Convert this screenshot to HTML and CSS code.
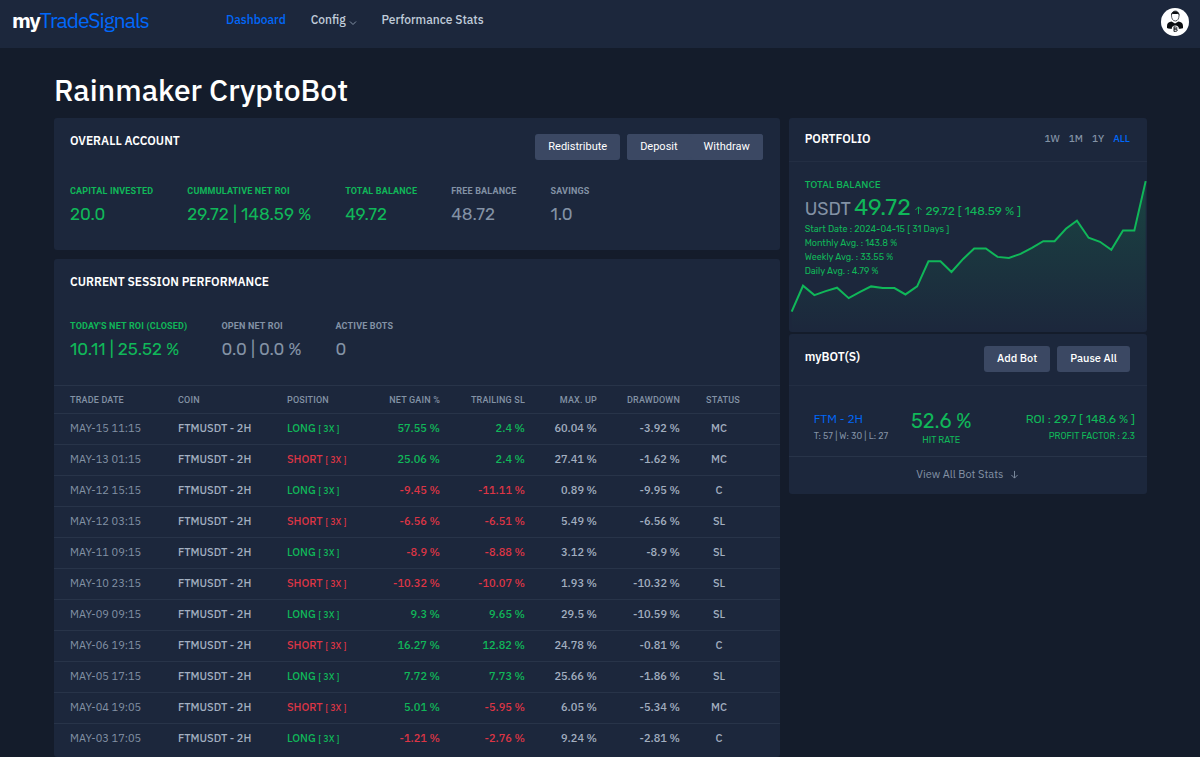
FILE: index.html
```html
<!DOCTYPE html>
<html lang="en">
<head>
    <meta charset="UTF-8">
    <meta name="viewport" content="width=device-width, initial-scale=1.0">
    <title>myTradeSignals</title>
    <link rel="stylesheet" href="styles.css">
</head>
<body>

    <header class="topbar">
        <a class="logo" href="#"><b>my</b>TradeSignals</a>
        <nav class="menu">
            <a class="active" href="#">Dashboard</a>
            <a href="#">Config <svg class="chevron" viewBox="0 0 8 6"><path d="M1 1.500l3 3 3-3"/></svg></a>
            <a href="#">Performance Stats</a>
        </nav>
        <button class="avatar" aria-label="Account">
            <svg viewBox="0 0 28 28">
                <circle cx="14" cy="14" r="14" fill="#fff"/>
                <path d="M6 20v-2c0-3 2-4 4.500-4.500l3.500 2 3.500-2c2.500.5 4.500 1.500 4.500 4.500v2c-1 1.300-14 1.300-16 0z" fill="#0b0d10"/>
                <path d="M10.500 7.500c0-6 7.500-6 7.500 0 0 2.500-1 5.500-3.700 5.500s-3.800-3-3.800-5.500z" fill="#fff" stroke="#15181c" stroke-width=".7"/>
                <path d="M10 8c-.5-6.500 9-6.500 8.500 0l-1-2.300c-2 .5-4.500.5-6.500 0z" fill="#0b0d10"/>
                <circle cx="14.300" cy="21" r="3.600" fill="#fff"/>
                <path d="M13 18.500v5M13 19h1.500c2 0 2 2 0 2H13M13 21h1.800c2 0 2 2.300 0 2.300H13" fill="none" stroke="#15181c" stroke-width="1"/>
            </svg>
        </button>
    </header>

    <main class="page">
        <h1>Rainmaker CryptoBot</h1>

        <div class="columns">
            <div class="left">
                <section class="card account">
                    <div class="card-top">
                        <h2>OVERALL ACCOUNT</h2>
                        <div class="buttons">
                            <button class="btn">Redistribute</button>
                            <div class="btn-group">
                                <button class="btn">Deposit</button>
                                <button class="btn">Withdraw</button>
                            </div>
                        </div>
                    </div>
                    <div class="stats">
                        <div class="green"><h3>CAPITAL INVESTED</h3><p>20.0</p></div>
                        <div class="green"><h3>CUMMULATIVE NET ROI</h3><p>29.72 | 148.59 %</p></div>
                        <div class="green"><h3>TOTAL BALANCE</h3><p>49.72</p></div>
                        <div><h3>FREE BALANCE</h3><p>48.72</p></div>
                        <div><h3>SAVINGS</h3><p>1.0</p></div>
                    </div>
                </section>

                <section class="card session">
                    <div class="card-top">
                        <h2>CURRENT SESSION PERFORMANCE</h2>
                    </div>
                    <div class="stats">
                        <div class="green"><h3>TODAY'S NET ROI (CLOSED)</h3><p>10.11 | 25.52 %</p></div>
                        <div><h3>OPEN NET ROI</h3><p>0.0 | 0.0 %</p></div>
                        <div><h3>ACTIVE BOTS</h3><p>0</p></div>
                    </div>
                    <table class="trades">
                        <colgroup>
                            <col class="c-date"><col class="c-coin"><col class="c-pos"><col class="c-gain">
                            <col class="c-sl"><col class="c-up"><col class="c-down"><col class="c-status">
                        </colgroup>
                        <thead>
                            <tr><th>TRADE DATE</th><th>COIN</th><th>POSITION</th><th>NET GAIN %</th><th>TRAILING SL</th><th>MAX. UP</th><th>DRAWDOWN</th><th>STATUS</th></tr>
                        </thead>
                        <tbody>
                            <tr><td>MAY-15 11:15</td><td>FTMUSDT - 2H</td><td class="green">LONG <small>[ 3X ]</small></td><td class="green">57.55 %</td><td class="green">2.4 %</td><td>60.04 %</td><td>-3.92 %</td><td>MC</td></tr>
                            <tr><td>MAY-13 01:15</td><td>FTMUSDT - 2H</td><td class="red">SHORT <small>[ 3X ]</small></td><td class="green">25.06 %</td><td class="green">2.4 %</td><td>27.41 %</td><td>-1.62 %</td><td>MC</td></tr>
                            <tr><td>MAY-12 15:15</td><td>FTMUSDT - 2H</td><td class="green">LONG <small>[ 3X ]</small></td><td class="red">-9.45 %</td><td class="red">-11.11 %</td><td>0.89 %</td><td>-9.95 %</td><td>C</td></tr>
                            <tr><td>MAY-12 03:15</td><td>FTMUSDT - 2H</td><td class="red">SHORT <small>[ 3X ]</small></td><td class="red">-6.56 %</td><td class="red">-6.51 %</td><td>5.49 %</td><td>-6.56 %</td><td>SL</td></tr>
                            <tr><td>MAY-11 09:15</td><td>FTMUSDT - 2H</td><td class="green">LONG <small>[ 3X ]</small></td><td class="red">-8.9 %</td><td class="red">-8.88 %</td><td>3.12 %</td><td>-8.9 %</td><td>SL</td></tr>
                            <tr><td>MAY-10 23:15</td><td>FTMUSDT - 2H</td><td class="red">SHORT <small>[ 3X ]</small></td><td class="red">-10.32 %</td><td class="red">-10.07 %</td><td>1.93 %</td><td>-10.32 %</td><td>SL</td></tr>
                            <tr><td>MAY-09 09:15</td><td>FTMUSDT - 2H</td><td class="green">LONG <small>[ 3X ]</small></td><td class="green">9.3 %</td><td class="green">9.65 %</td><td>29.5 %</td><td>-10.59 %</td><td>SL</td></tr>
                            <tr><td>MAY-06 19:15</td><td>FTMUSDT - 2H</td><td class="red">SHORT <small>[ 3X ]</small></td><td class="green">16.27 %</td><td class="green">12.82 %</td><td>24.78 %</td><td>-0.81 %</td><td>C</td></tr>
                            <tr><td>MAY-05 17:15</td><td>FTMUSDT - 2H</td><td class="green">LONG <small>[ 3X ]</small></td><td class="green">7.72 %</td><td class="green">7.73 %</td><td>25.66 %</td><td>-1.86 %</td><td>SL</td></tr>
                            <tr><td>MAY-04 19:05</td><td>FTMUSDT - 2H</td><td class="red">SHORT <small>[ 3X ]</small></td><td class="green">5.01 %</td><td class="red">-5.95 %</td><td>6.05 %</td><td>-5.34 %</td><td>MC</td></tr>
                            <tr><td>MAY-03 17:05</td><td>FTMUSDT - 2H</td><td class="green">LONG <small>[ 3X ]</small></td><td class="red">-1.21 %</td><td class="red">-2.76 %</td><td>9.24 %</td><td>-2.81 %</td><td>C</td></tr>
                        </tbody>
                    </table>
                </section>
            </div>

            <div class="right">
                <section class="card">
                    <div class="card-head portfolio-head">
                        <h2>PORTFOLIO</h2>
                        <nav class="ranges">
                            <a href="#">1W</a>
                            <a href="#">1M</a>
                            <a href="#">1Y</a>
                            <a class="active" href="#">ALL</a>
                        </nav>
                    </div>
                    <div class="portfolio">
                        <svg class="chart" viewBox="12 141 1074 507" preserveAspectRatio="none">
                            <defs>
                                <linearGradient id="fade" x1="0" y1="0" x2="0" y2="1">
                                    <stop offset="0" stop-color="#10b759" stop-opacity=".2"/>
                                    <stop offset="1" stop-color="#10b759" stop-opacity="0"/>
                                </linearGradient>
                            </defs>
                            <path fill="url(#fade)" d="M20 587L54 510 88 538 122 526 156 516 191 547 225 528 258 512 293 517 328 517 361 536 396 512 430 437 466 437 499 469 534 430 567 399 602 399 637 424 671 427 706 415 740 397 774 377 808 377 842 340 875 316 910 367 944 379 978 403 1013 345 1047 345 1081 198V648H20z"/>
                            <path class="line" d="M20 587L54 510 88 538 122 526 156 516 191 547 225 528 258 512 293 517 328 517 361 536 396 512 430 437 466 437 499 469 534 430 567 399 602 399 637 424 671 427 706 415 740 397 774 377 808 377 842 340 875 316 910 367 944 379 978 403 1013 345 1047 345 1081 198"/>
                        </svg>
                        <div class="summary">
                            <h3>TOTAL BALANCE</h3>
                            <p class="balance"><span class="unit">USDT</span> <span class="amount">49.72</span> <svg class="arrow" viewBox="0 0 10 10"><path d="M5 9V1M1.500 4.500L5 1l3.500 3.500"/></svg> <span>29.72 [ 148.59 % ]</span></p>
                            <p>Start Date : 2024-04-15 [ 31 Days ]</p>
                            <p>Monthly Avg. : 143.8 %</p>
                            <p>Weekly Avg. : 33.55 %</p>
                            <p>Daily Avg. : 4.79 %</p>
                        </div>
                    </div>
                </section>

                <section class="card">
                    <div class="card-head bots-head">
                        <h2>myBOT(S)</h2>
                        <div class="buttons">
                            <button class="btn">Add Bot</button>
                            <button class="btn">Pause All</button>
                        </div>
                    </div>
                    <div class="bot">
                        <div>
                            <a class="bot-name" href="#">FTM - 2H</a>
                            <p class="muted">T: 57 | W: 30 | L: 27</p>
                        </div>
                        <div class="rate">
                            <p class="big">52.6 %</p>
                            <p>HIT RATE</p>
                        </div>
                        <div class="roi">
                            <p class="medium">ROI : 29.7 [ 148.6 % ]</p>
                            <p>PROFIT FACTOR : 2.3</p>
                        </div>
                    </div>
                    <a class="view-all" href="#">View All Bot Stats <svg class="arrow" viewBox="0 0 10 10"><path d="M5 1v8M1.500 5.500L5 9l3.500-3.500"/></svg></a>
                </section>
            </div>
        </div>
    </main>

</body>
</html>
```
FILE: styles.css
```css
* {
    box-sizing: border-box;
}
body {
    margin: 0;
    min-height: 100vh;
    display: flex;
    flex-direction: column;
    background-color: #141c2b;
    color: #8392a5;
    font-family: "IBM Plex Sans", Inter, sans-serif;
    font-size: 12px;
}
h1, h2, h3, p {
    margin: 0;
}
a {
    color: inherit;
    text-decoration: none;
}
.topbar {
    display: flex;
    align-items: flex-start;
    height: 48px;
    padding: 8px 11px 0 12px;
    background-color: #1c273c;
}
.logo {
    width: 214px;
    font-size: 21px;
    line-height: 24px;
    color: #0168fa;
    letter-spacing: -1px;
}
.logo b {
    color: #fff;
}
.menu {
    display: flex;
    flex: 1;
    gap: 25px;
    font-size: 12px;
    font-weight: 500;
    line-height: 24px;
    color: #c0ccda;
}
.active {
    color: #0168fa;
}
.chevron {
    width: 8px;
    height: 6px;
    vertical-align: -2px;
    fill: none;
    stroke: #8392a5;
}
.avatar {
    width: 28px;
    height: 28px;
    padding: 0;
    border: none;
    background: none;
}
.avatar svg {
    display: block;
}
.page {
    flex: 1;
    display: flex;
    flex-direction: column;
    padding: 24px 53px 0 54px;
}
h1 {
    margin-bottom: 10px;
    font-size: 30px;
    font-weight: 500;
    line-height: 36px;
    color: #fff;
}
.columns {
    flex: 1;
    display: grid;
    grid-template-columns: repeat(12, minmax(0, 1fr));
    gap: 9px;
}
.left {
    grid-column: span 8;
    display: flex;
    flex-direction: column;
    gap: 9px;
}
.right {
    grid-column: span 4;
    display: flex;
    flex-direction: column;
    gap: 2px;
}
.card {
    background-color: #1c273c;
    border-radius: 3px;
}
.session {
    flex: 1;
}
.card-top {
    display: flex;
    justify-content: space-between;
    padding: 16px 17px 0 16px;
}
h2 {
    font-size: 12px;
    font-weight: 600;
    line-height: 14px;
    color: #fff;
}
.buttons {
    display: flex;
    gap: 7px;
}
.btn {
    height: 26px;
    padding: 0 13px 2px;
    border: none;
    border-radius: 3px;
    background-color: #3b4863;
    color: #fff;
    font-family: Roboto, sans-serif;
    font-size: 11px;
    font-weight: 400;
}
.btn-group {
    display: flex;
    border-radius: 3px;
    background-color: #3b4863;
}
.stats {
    display: flex;
    gap: 34px;
    padding: 25px 16px 25px;
}
.session .stats {
    padding: 31px 16px 25px;
}
.stats h3 {
    margin-bottom: 6px;
    font-family: Roboto, sans-serif;
    font-size: 9px;
    font-weight: 700;
    line-height: 12px;
    letter-spacing: 0.02em;
}
.stats p {
    font-family: Rubik, Inter, sans-serif;
    font-size: 17px;
    line-height: 22px;
}
.green {
    color: #10b759;
}
.red {
    color: #dc3545;
}
.trades {
    width: 100%;
    table-layout: fixed;
    border-collapse: collapse;
}
.c-date { width: 116px; }
.c-coin { width: 109px; }
.c-pos { width: 85px; }
.c-gain { width: 84px; }
.c-sl { width: 85px; }
.c-up { width: 72px; }
.c-down { width: 83px; }
.c-status { width: 92px; }
.trades th, .trades td {
    padding: 0 8px;
    border-top: 1px solid #283449;
    text-align: right;
    white-space: nowrap;
}
.trades th {
    height: 28px;
    font-family: Roboto, sans-serif;
    font-size: 9px;
    font-weight: 500;
    letter-spacing: 0.02em;
}
.trades td {
    height: 31px;
    padding-bottom: 2px;
    font-size: 11px;
    font-weight: 500;
}
.trades td:not(.green):not(.red) {
    color: #a3afc0;
}
.trades tr > :nth-child(-n+3) {
    text-align: left;
}
.trades tr > :first-child {
    padding-left: 16px;
}
.trades td:first-child:not(.green) {
    color: #8392a5;
    font-weight: 400;
}
.trades tr > :last-child {
    padding-right: 30px;
    padding-left: 8px;
    text-align: center;
}
.trades tr > td:last-child {
    padding-right: 38px;
}
.trades small {
    font-size: 9px;
}
.card-head {
    display: flex;
    justify-content: space-between;
    padding: 0 17px 0 16px;
    border-bottom: 1px solid #232e43;
}
.portfolio-head {
    height: 44px;
    padding-top: 14px;
}
.ranges {
    display: flex;
    gap: 9px;
    font-size: 10px;
    font-weight: 500;
    line-height: 14px;
}
.portfolio {
    position: relative;
    height: 170px;
    padding: 16px;
    color: #10b759;
}
.chart {
    position: absolute;
    left: 0;
    top: 0;
    width: 100%;
    height: 100%;
}
.line {
    fill: none;
    stroke: #10b759;
    stroke-width: 2;
    vector-effect: non-scaling-stroke;
}
.summary {
    position: relative;
    font-family: Rubik, Inter, sans-serif;
    font-size: 9px;
    line-height: 14px;
}
.summary h3 {
    font-family: "IBM Plex Sans", Inter, sans-serif;
    font-size: 10px;
    font-weight: 500;
    line-height: 14px;
}
.balance {
    height: 30px;
    font-size: 12px;
    line-height: 30px;
}
.balance .unit {
    font-size: 18px;
    color: #8392a5;
}
.balance .amount {
    font-size: 23px;
}
.arrow {
    width: 9px;
    height: 9px;
    fill: none;
    stroke: currentColor;
}
.bots-head {
    height: 52px;
    padding-top: 12px;
}
.bots-head h2 {
    line-height: 22px;
}
.bots-head .btn {
    font-family: "IBM Plex Sans", Inter, sans-serif;
    font-weight: 500;
}
.bot {
    display: grid;
    grid-template-columns: 1fr 1fr 2fr;
    column-gap: 18px;
    height: 71px;
    padding: 24px 12px 0 25px;
    border-bottom: 1px solid #283449;
    font-family: Rubik, Inter, sans-serif;
    font-size: 9px;
    line-height: 16px;
    color: #10b759;
    white-space: nowrap;
}
.bot-name {
    font-family: "IBM Plex Sans", Inter, sans-serif;
    font-size: 12px;
    line-height: 18px;
    color: #0168fa;
}
.muted {
    color: #8392a5;
}
.rate {
    text-align: center;
}
.big {
    font-size: 20px;
    line-height: 22px;
}
.roi {
    text-align: right;
}
.medium {
    font-size: 12px;
    line-height: 18px;
}
.view-all {
    display: flex;
    justify-content: center;
    align-items: center;
    gap: 7px;
    padding: 9px 0 12px;
    font-size: 11px;
    line-height: 16px;
}
```
